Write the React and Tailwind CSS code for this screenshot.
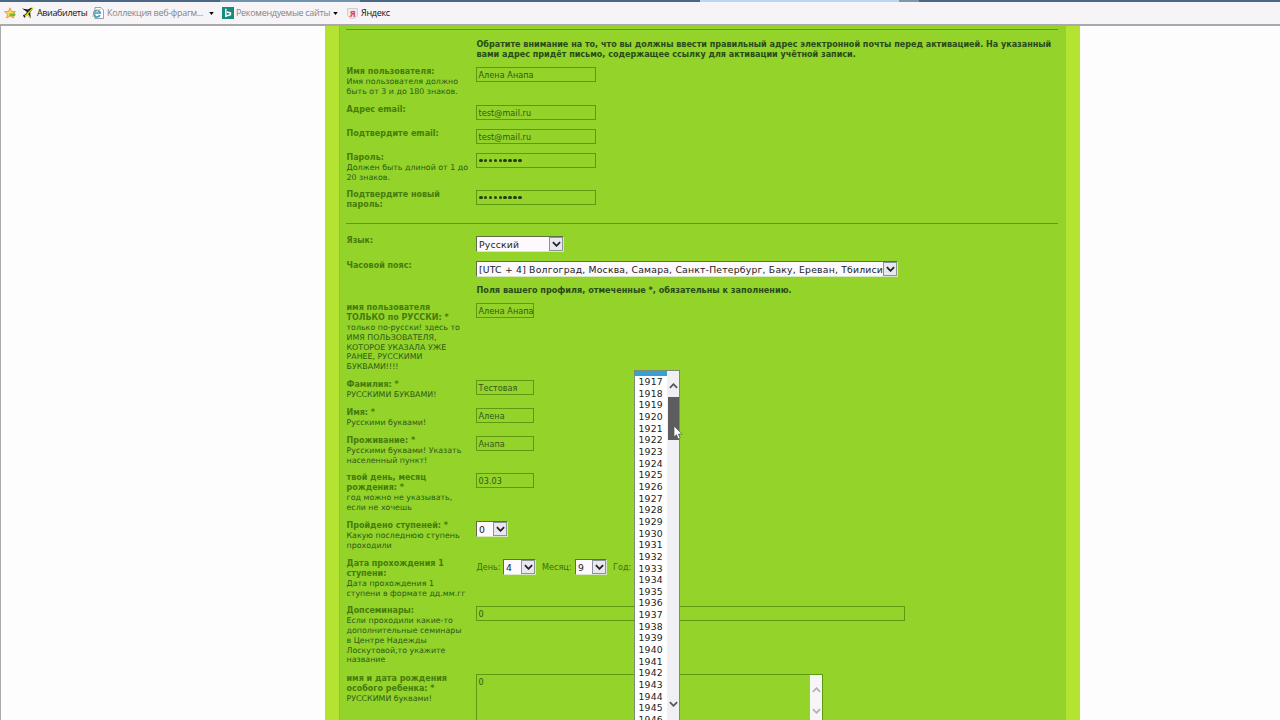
import React from 'react';
import clsx from 'clsx';

const years = Array.from({ length: 30 }, (_, i) => 1917 + i);

function Chevron({ up = false, className }) {
  return (
    <svg viewBox="0 0 10 6" className={className} fill="none" stroke="currentColor" strokeWidth="2">
      <path d={up ? 'M1 5 L5 1 L9 5' : 'M1 1 L5 5 L9 1'} />
    </svg>
  );
}

function Field({ value, className = 'w-[58px]' }) {
  return (
    <div className={clsx('h-[15px] shrink-0 border border-[#5d9a10] pl-[1.5px] text-[8.1px] leading-[14px] tracking-[0.05px] text-[#35571c] whitespace-nowrap', className)}>
      {value}
    </div>
  );
}

function Password() {
  return (
    <div className="flex h-[15px] w-[120px] items-center gap-[1.3px] border border-[#5d9a10] pl-[2px]">
      {Array.from({ length: 9 }, (_, i) => (
        <i key={i} className="size-[3.6px] rounded-full bg-[#263d13]" />
      ))}
    </div>
  );
}

function Select({ value, className }) {
  return (
    <div className={clsx('flex h-[16px] shrink-0 border border-t-[#5d7048] border-l-[#5d7048] border-r-[#d8e8c4] border-b-[#d8e8c4] bg-[#fdf9fd] text-[#222] whitespace-nowrap', className)}>
      <span className="flex-1 pl-[2px] text-[9.25px] leading-[15px] tracking-[0.21px]">{value}</span>
      <span className="flex w-[14px] items-center justify-center border border-[#8d939c] bg-[#e9e7ef] text-[#222]">
        <Chevron className="h-[6px] w-[9px]" />
      </span>
    </div>
  );
}

function Row({ label = [], hint = [], className, children }) {
  return (
    <div className={clsx('flex shrink-0', className)}>
      <div className="w-[130px] shrink-0 pt-[0.4px] pl-[0.5px] text-[7.9px] leading-[9.8px] whitespace-nowrap">
        {label.map((line) => (
          <div key={line} className="text-[8px] font-bold text-[#467c0b]">{line}</div>
        ))}
        {hint.map((line) => (
          <div key={line} className="text-[#2d5a18]">{line}</div>
        ))}
      </div>
      {children}
    </div>
  );
}

function Toolbar() {
  return (
    <div className="flex h-[26px] shrink-0 flex-col border-b-2 border-[#a9a9ab] bg-[#f6f4f7] font-['Open_Sans','Noto_Sans',sans-serif] text-[9px] tracking-[-0.3px]">
      <div className="flex h-[2px] shrink-0 bg-[#4a6685]">
        <span className="ml-[220px] w-[140px] bg-[#6f93ae]" />
        <span className="ml-[340px] w-[199px] bg-[#b5d9f3]" />
        <span className="w-[20px] bg-[#8296aa]" />
      </div>
      <div className="flex flex-1 items-center pl-[4px] whitespace-nowrap text-[#111]">
        <svg viewBox="0 0 12 12" className="size-[12px]">
          <path d="M6 .8 7.5 4.4 11.4 4.7 8.5 7.2 9.3 11 6 9 2.7 11 3.5 7.2.6 4.7 4.5 4.4Z" fill="#ffd75c" stroke="#e69631" strokeWidth=".9" />
          <path d="M5.5 6.5h4V5l2.3 2.8-2.3 2.7V9h-4Z" fill="#69bd3b" />
        </svg>
        <svg viewBox="0 0 12 12" className="ml-[6px] size-[12px]">
          <path d="M0 1.5 6 2.5 9 .8 11 1 10 3 8.2 5.5 8.7 11 7.5 10.5 5.7 7.5 3.5 9.2 3 11 1.5 9.5 1 8 3 7.5 5 5Z" fill="#1d1d17" />
          <path d="M11 1 3 9.2M5.7 7.5 8.2 10.8" stroke="#d9d91e" strokeWidth="1.3" />
        </svg>
        <span className="ml-[3px] w-[51px] tracking-[-0.38px]">Авиабилеты</span>
        <svg viewBox="0 0 12 12" className="ml-[4px] size-[12px]">
          <path d="M3 .5h6l2.5 2.5v8.5H3Z" fill="#fff" stroke="#8a8a8a" strokeWidth=".8" />
          <path d="M8 8.2A3.3 3.3 0 1 1 8.3 6H2.5" fill="none" stroke="#3d9cd2" strokeWidth="1.7" />
          <path d="M.6 10C1 6 5 2.5 9 2.4" fill="none" stroke="#e3bd45" strokeWidth=".8" />
        </svg>
        <span className="ml-[3px] w-[98px] text-[#858585]">Коллекция веб-фрагм...</span>
        <svg viewBox="0 0 6 4" className="ml-[4px] h-[3px] w-[5px]"><path d="M0 0h6L3 4Z" /></svg>
        <svg viewBox="0 0 12 12" className="ml-[8px] size-[12px]">
          <path d="M0 0h12v12H0Z" fill="#168c7c" />
          <path d="M3.8 1.8v7.4l4.6-1.5V5.9L5 5" fill="none" stroke="#fff" strokeWidth="1.5" />
        </svg>
        <span className="ml-[2px] w-[94px] text-[#858585]">Рекомендуемые сайты</span>
        <svg viewBox="0 0 6 4" className="ml-[3px] h-[3px] w-[5px]"><path d="M0 0h6L3 4Z" /></svg>
        <span className="ml-[9px] flex size-[11px] items-center justify-center rounded-b-[5px] border border-[#d2cfd3] bg-[#eeeaec] text-[9px] leading-none font-bold text-[#e33e4b]">Я</span>
        <span className="ml-[3px]">Яндекс</span>
      </div>
    </div>
  );
}

function YearList() {
  return (
    <div className="absolute top-[370px] left-[634px] flex h-[360px] w-[46px] border border-[#7d8a78] bg-white">
      <div className="w-[32px] text-[9.25px] leading-[11.66px] tracking-[0.2px] text-[#222]">
        <div className="h-[5px] bg-[#34a0d3]" />
        {years.map((year) => (
          <div key={year} className="pl-[3.5px]">{year}</div>
        ))}
      </div>
      <div className="flex flex-1 flex-col items-center bg-[#f0eff3] text-[#55555a]">
        <Chevron up className="mt-[12px] h-[6px] w-[9px] shrink-0" />
        <div className="mt-[8px] h-[43px] w-[11px] shrink-0 bg-[#5d5d5f]" />
        <Chevron className="mt-[261px] h-[6px] w-[9px] shrink-0" />
      </div>
    </div>
  );
}

function ProfileForm() {
  return (
    <div className="flex h-full w-[727px] shrink-0 flex-col border-l border-[#8bc82a] bg-[#93d32a] pl-[6px]">
      <div className="mt-[3px] h-px w-[712px] shrink-0 bg-[#61990f]" />
      <div className="mt-[10px] ml-[130.5px] h-[27px] shrink-0 text-[8.05px] leading-[9.75px] font-bold whitespace-nowrap text-[#294b18]">
        <div>Обратите внимание на то, что вы должны ввести правильный адрес электронной почты перед активацией. На указанный</div>
        <div>вами адрес придёт письмо, содержащее ссылку для активации учётной записи.</div>
      </div>
      <Row className="h-[38px]" label={['Имя пользователя:']} hint={['Имя пользователя должно', 'быть от 3 и до 180 знаков.']}>
        <Field value="Алена Анапа" className="w-[120px]" />
      </Row>
      <Row className="h-[24px]" label={['Адрес email:']}>
        <Field value="test@mail.ru" className="w-[120px]" />
      </Row>
      <Row className="h-[24px]" label={['Подтвердите email:']}>
        <Field value="test@mail.ru" className="w-[120px]" />
      </Row>
      <Row className="h-[37px]" label={['Пароль:']} hint={['Должен быть длиной от 1 до', '20 знаков.']}>
        <Password />
      </Row>
      <Row className="h-[33px]" label={['Подтвердите новый', 'пароль:']}>
        <Password />
      </Row>
      <div className="h-px w-[712px] shrink-0 bg-[#61990f]" />
      <Row className="mt-[12px] h-[25px]" label={['Язык:']}>
        <Select value="Русский" className="w-[88px]" />
      </Row>
      <Row className="h-[24px]" label={['Часовой пояс:']}>
        <Select value="[UTC + 4] Волгоград, Москва, Самара, Санкт-Петербург, Баку, Ереван, Тбилиси" className="w-[422px]" />
      </Row>
      <Row className="h-[18px]">
        <div className="pl-[0.5px] text-[8.15px] leading-[10px] font-bold text-[#294b18]">Поля вашего профиля, отмеченные *, обязательны к заполнению.</div>
      </Row>
      <Row
        className="h-[77px]"
        label={['имя пользователя', 'ТОЛЬКО по РУССКИ: *']}
        hint={['только по-русски! здесь то', 'ИМЯ ПОЛЬЗОВАТЕЛЯ,', 'КОТОРОЕ УКАЗАЛА УЖЕ', 'РАНЕЕ, РУССКИМИ', 'БУКВАМИ!!!!']}
      >
        <Field value="Алена Анапа" />
      </Row>
      <Row className="h-[28px]" label={['Фамилия: *']} hint={['РУССКИМИ БУКВАМИ!']}>
        <Field value="Тестовая" />
      </Row>
      <Row className="h-[28px]" label={['Имя: *']} hint={['Русскими буквами!']}>
        <Field value="Алена" />
      </Row>
      <Row className="h-[37px]" label={['Проживание: *']} hint={['Русскими буквами! Указать', 'населенный пункт!']}>
        <Field value="Анапа" />
      </Row>
      <Row className="h-[48px]" label={['твой день, месяц', 'рождения: *']} hint={['год можно не указывать,', 'если не хочешь']}>
        <Field value="03.03" />
      </Row>
      <Row className="h-[38px]" label={['Пройдено ступеней: *']} hint={['Какую последнюю ступень', 'проходили']}>
        <Select value="0" className="w-[32px]" />
      </Row>
      <Row className="h-[47px]" label={['Дата прохождения 1', 'ступени:']} hint={['Дата прохождения 1', 'ступени в формате дд.мм.гг']}>
        <div className="flex h-[16px] items-center pl-[0.5px] text-[8.1px] whitespace-nowrap text-[#3d6e12]">
          <span className="w-[26.5px]">День:</span>
          <Select value="4" className="w-[33px]" />
          <span className="ml-[6px] w-[33px]">Месяц:</span>
          <Select value="9" className="w-[32px]" />
          <span className="ml-[6px]">Год:</span>
        </div>
      </Row>
      <Row
        className="h-[68px]"
        label={['Допсеминары:']}
        hint={['Если проходили какие-то', 'дополнительные семинары', 'в Центре Надежды', 'Лоскутовой,то укажите', 'название']}
      >
        <Field value="0" className="w-[429px]" />
      </Row>
      <Row className="h-[80px]" label={['имя и дата рождения', 'особого ребенка: *']} hint={['РУССКИМИ буквами!']}>
        <div className="flex h-[80px] w-[347px] justify-between border border-[#5d9a10] pl-[1.5px] text-[8.1px] leading-[15px] text-[#35571c]">
          <span>0</span>
          <div className="flex w-[12px] flex-col items-center bg-[#f6f6f8] pt-[12px] text-[#b2b2b5]">
            <Chevron up className="h-[6px] w-[9px]" />
            <Chevron className="mt-[15px] h-[6px] w-[9px]" />
          </div>
        </div>
      </Row>
    </div>
  );
}

export default function App() {
  return (
    <div className="relative flex h-[720px] w-[1280px] flex-col overflow-hidden bg-[#fdfdfd] font-['DejaVu_Sans',sans-serif]">
      <Toolbar />
      <div className="flex min-h-0 flex-1 justify-start overflow-hidden border-l border-[#a9a9ab] pl-[324px]">
        <div className="flex h-full w-[755px] overflow-hidden bg-[#b5e331] pl-[14px]">
          <ProfileForm />
        </div>
      </div>
      <YearList />
      <svg viewBox="0 0 10 16" className="absolute top-[425px] left-[673px] h-[16px] w-[10px]">
        <path d="M1 1v11l2.5-2.3L5.2 14l2-.9-1.8-4H9Z" fill="#fff" stroke="#555" strokeWidth=".7" />
      </svg>
    </div>
  );
}
